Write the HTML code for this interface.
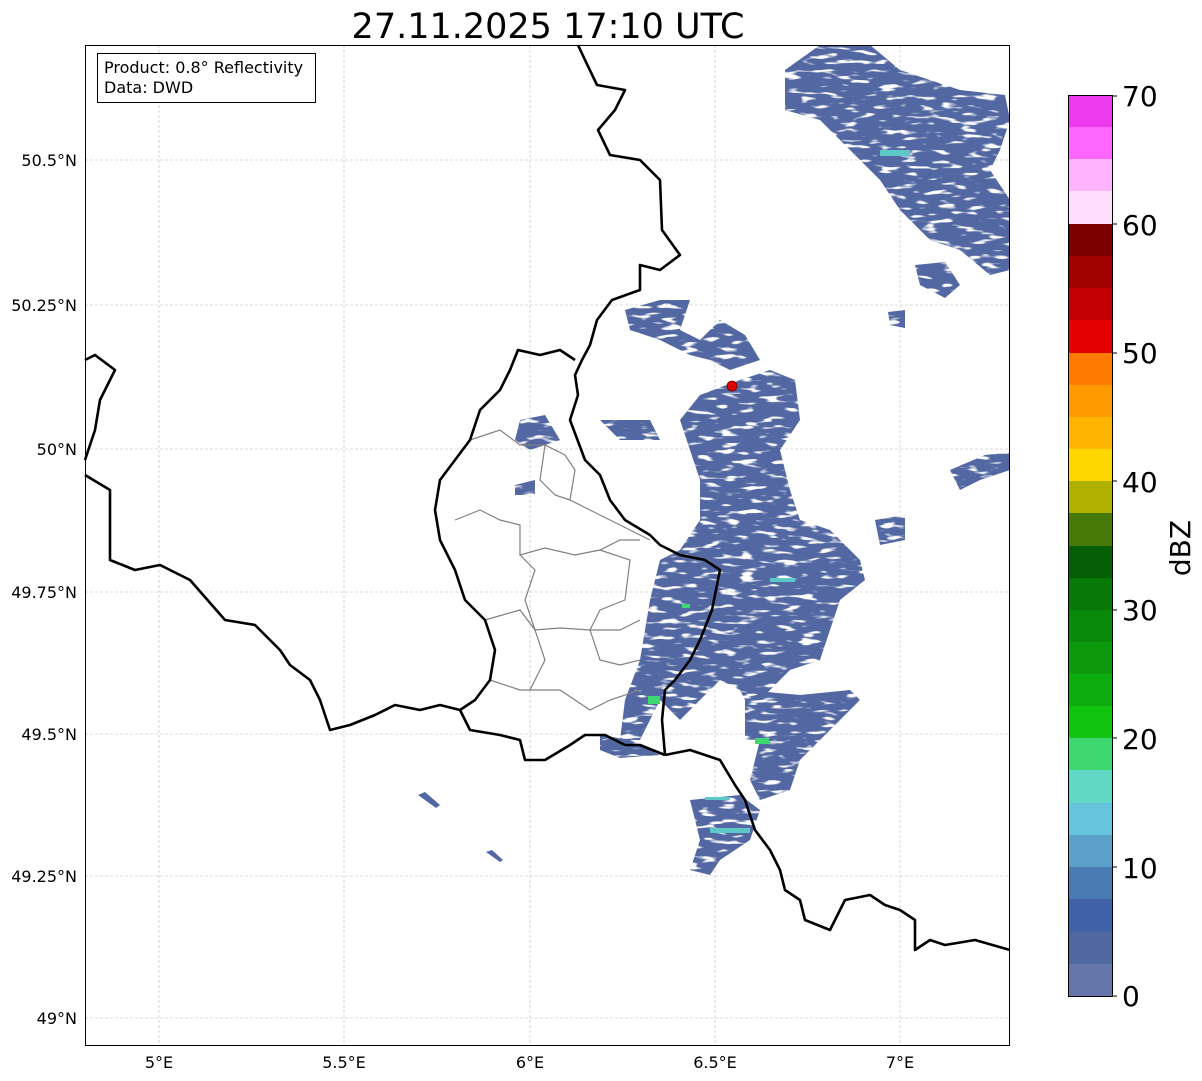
<!DOCTYPE html><html><head><style>body{margin:0;background:#fff}svg{display:block}text{font-family:"DejaVu Sans",sans-serif}</style></head><body>
<svg width="1202" height="1081" xmlns="http://www.w3.org/2000/svg">
<defs>
<filter id="sp" x="0" y="0" width="100%" height="100%">
<feTurbulence type="fractalNoise" baseFrequency="0.05 0.2" numOctaves="2" seed="3" result="n"/>
<feColorMatrix in="n" type="matrix" values="0 0 0 0 0  0 0 0 0 0  0 0 0 0 0  0 0 0 -8 5.6" result="m"/>
<feComposite in="SourceGraphic" in2="m" operator="in"/>
</filter>
</defs>
<text x="548" y="38" font-size="35" text-anchor="middle">27.11.2025 17:10 UTC</text>
<g stroke="#b8b8b8" stroke-width="0.6" stroke-dasharray="3,2">
<line x1="159" y1="45" x2="159" y2="1046"/><line x1="344" y1="45" x2="344" y2="1046"/><line x1="530" y1="45" x2="530" y2="1046"/><line x1="715" y1="45" x2="715" y2="1046"/><line x1="900" y1="45" x2="900" y2="1046"/>
<line x1="85" y1="160" x2="1010" y2="160"/><line x1="85" y1="305" x2="1010" y2="305"/><line x1="85" y1="449" x2="1010" y2="449"/><line x1="85" y1="592" x2="1010" y2="592"/><line x1="85" y1="734" x2="1010" y2="734"/><line x1="85" y1="876" x2="1010" y2="876"/><line x1="85" y1="1018" x2="1010" y2="1018"/>
</g>
<g fill="#5268a2" filter="url(#sp)">
<polygon points="785,70 820,45 870,45 900,70 960,90 1005,95 1010,120 1000,150 990,170 1010,200 1010,270 990,275 960,250 930,240 900,210 880,180 850,150 820,120 785,110"/>
<polygon points="915,265 945,262 960,285 945,298 920,285"/>
<polygon points="625,310 660,300 690,300 680,330 700,340 720,320 745,335 760,360 730,370 710,360 690,355 660,340 630,330"/>
<polygon points="700,395 740,380 770,370 795,380 800,420 780,450 790,490 800,520 830,530 860,560 865,580 840,600 830,630 820,660 790,670 770,690 750,710 740,690 720,680 700,700 680,720 660,700 640,740 620,740 625,700 640,660 650,600 660,560 680,550 700,520 700,480 690,450 680,420"/>
<polygon points="745,690 800,695 850,690 860,700 830,730 800,760 790,790 760,800 750,780 760,740 745,740"/>
<polygon points="690,800 740,795 760,810 750,840 720,860 710,875 690,870 700,840"/>
<polygon points="950,470 985,455 1010,452 1010,470 980,480 960,490"/>
<polygon points="875,520 905,515 905,540 880,545"/>
<polygon points="600,420 650,420 660,440 620,440"/>
<polygon points="520,420 545,415 560,440 530,450 515,440"/>
<polygon points="515,485 535,480 535,495 515,495"/>
<polygon points="600,735 630,740 660,755 620,758 600,750"/>
<polygon points="888,312 905,310 905,328 890,325"/>
</g>
<g fill="#5268a2">
<polygon points="418,795 425,792 440,805 436,808"/>
<polygon points="486,852 492,850 503,860 500,862"/>
</g>
<g fill="#5ec8c8"><rect x="880" y="150" width="30" height="6"/><rect x="770" y="578" width="25" height="4"/><rect x="710" y="828" width="40" height="5"/><rect x="705" y="797" width="25" height="3"/></g>
<g fill="#3dd870"><rect x="648" y="696" width="12" height="8"/><rect x="755" y="738" width="14" height="6"/><rect x="682" y="604" width="8" height="4"/></g>
<circle cx="732" cy="386" r="5" fill="#e00000" stroke="#600" stroke-width="0.8"/>
<g fill="none" stroke="#808080" stroke-width="1.2">
<polyline points="470,440 500,430 520,445 545,445 565,455 575,470 570,500 590,510 610,520 630,530 650,540"/>
<polyline points="455,520 480,510 500,520 520,525 520,555 545,548 575,555 600,550 620,540 640,540"/>
<polyline points="520,555 535,570 525,600 535,630 560,628 590,630 620,630 640,620"/>
<polyline points="485,620 520,610 535,630 545,660 530,690 560,690 590,710 610,700 640,690"/>
<polyline points="590,630 600,660 620,665 640,660"/>
<polyline points="545,445 540,480 555,495 570,500"/>
<polyline points="490,680 520,690 530,690"/>
<polyline points="600,550 630,560 625,600 600,610 590,630"/>
</g>
<g fill="none" stroke="#000" stroke-width="2.6" stroke-linejoin="round">
<polyline points="578,45 585,60 597,85 625,90 615,110 598,130 610,155 640,160 660,180 662,230 680,255 660,270 640,265 640,290 612,300 597,320 590,345 582,360 575,375 578,395 570,420 585,460 600,475 610,500 625,520 650,535 660,545 680,555 705,560 720,570 712,610 700,640 690,660 675,680 665,690 662,720 665,755"/>
<polyline points="665,755 690,750 720,760 735,785 745,800 755,830 770,850 780,870 785,890 800,900 805,920 830,930 845,900 870,895 885,905 900,910 915,920 915,950 930,940 945,945 975,940 1010,950"/>
<polyline points="575,360 560,350 540,355 518,350 510,370 500,390 480,410 470,440 455,460 440,480 435,510 440,540 455,570 465,600 485,620 495,650 490,680 475,700 460,710"/>
<polyline points="85,475 110,490 110,560 135,570 160,565 190,580 225,620 255,625 280,650 290,665 310,680 320,700 330,730 350,725 375,715 395,705 420,710 440,705 460,710 470,730 500,735 520,740 525,760 545,760 570,745 585,735 605,735 625,745 640,745 665,755"/>
<polyline points="85,360 95,355 115,370 100,400 95,430 85,460"/>
</g>
<rect x="85.5" y="45.5" width="924" height="1000" fill="none" stroke="#000" stroke-width="1"/>
<rect x="97.5" y="53.5" width="218" height="49" fill="#fff" stroke="#000" stroke-width="1"/>
<text x="104" y="73" font-size="16">Product: 0.8° Reflectivity</text>
<text x="104" y="93" font-size="16">Data: DWD</text>
<g font-size="16" text-anchor="end">
<text x="77" y="166">50.5°N</text><text x="77" y="311">50.25°N</text><text x="77" y="455">50°N</text><text x="77" y="598">49.75°N</text><text x="77" y="740">49.5°N</text><text x="77" y="882">49.25°N</text><text x="77" y="1024">49°N</text>
</g>
<g font-size="16" text-anchor="middle">
<text x="159" y="1068">5°E</text><text x="344" y="1068">5.5°E</text><text x="530" y="1068">6°E</text><text x="715" y="1068">6.5°E</text><text x="900" y="1068">7°E</text>
</g>
<g stroke="none">
<rect x="1068" y="95" width="44" height="33" fill="#ee3aee"/><rect x="1068" y="127" width="44" height="33" fill="#ff66ff"/><rect x="1068" y="159" width="44" height="33" fill="#ffb3ff"/><rect x="1068" y="191" width="44" height="33" fill="#ffddff"/>
<rect x="1068" y="224" width="44" height="33" fill="#7a0000"/><rect x="1068" y="256" width="44" height="33" fill="#a00000"/><rect x="1068" y="288" width="44" height="33" fill="#c40000"/><rect x="1068" y="320" width="44" height="33" fill="#e40000"/>
<rect x="1068" y="353" width="44" height="33" fill="#ff7a00"/><rect x="1068" y="385" width="44" height="33" fill="#ff9a00"/><rect x="1068" y="417" width="44" height="33" fill="#ffb400"/><rect x="1068" y="449" width="44" height="33" fill="#ffd700"/>
<rect x="1068" y="481" width="44" height="33" fill="#b0b000"/><rect x="1068" y="513" width="44" height="33" fill="#457a08"/><rect x="1068" y="546" width="44" height="33" fill="#056005"/><rect x="1068" y="578" width="44" height="33" fill="#087808"/>
<rect x="1068" y="610" width="44" height="33" fill="#0a880a"/><rect x="1068" y="642" width="44" height="33" fill="#0c9a0c"/><rect x="1068" y="674" width="44" height="33" fill="#0eac0e"/><rect x="1068" y="706" width="44" height="33" fill="#10c410"/>
<rect x="1068" y="738" width="44" height="33" fill="#3dd870"/><rect x="1068" y="770" width="44" height="33" fill="#60d8c4"/><rect x="1068" y="803" width="44" height="33" fill="#66c4dc"/><rect x="1068" y="835" width="44" height="33" fill="#5aa0c8"/>
<rect x="1068" y="867" width="44" height="33" fill="#4a7cb4"/><rect x="1068" y="899" width="44" height="33" fill="#4060a8"/><rect x="1068" y="932" width="44" height="33" fill="#5068a0"/><rect x="1068" y="964" width="44" height="32" fill="#6476aa"/>
</g>
<rect x="1068.5" y="95.5" width="44" height="901" fill="none" stroke="#000" stroke-width="1"/>
<g font-size="28">
<text x="1122" y="106">70</text><text x="1122" y="235">60</text><text x="1122" y="363">50</text><text x="1122" y="492">40</text><text x="1122" y="620">30</text><text x="1122" y="749">20</text><text x="1122" y="878">10</text><text x="1122" y="1006">0</text>
</g>
<g stroke="#000"><line x1="1112" y1="96" x2="1117" y2="96"/><line x1="1112" y1="224" x2="1117" y2="224"/><line x1="1112" y1="353" x2="1117" y2="353"/><line x1="1112" y1="481" x2="1117" y2="481"/><line x1="1112" y1="610" x2="1117" y2="610"/><line x1="1112" y1="738" x2="1117" y2="738"/><line x1="1112" y1="867" x2="1117" y2="867"/><line x1="1112" y1="996" x2="1117" y2="996"/></g>
<text x="1190" y="548" font-size="28" text-anchor="middle" transform="rotate(-90 1190 548)">dBZ</text>
</svg></body></html>
